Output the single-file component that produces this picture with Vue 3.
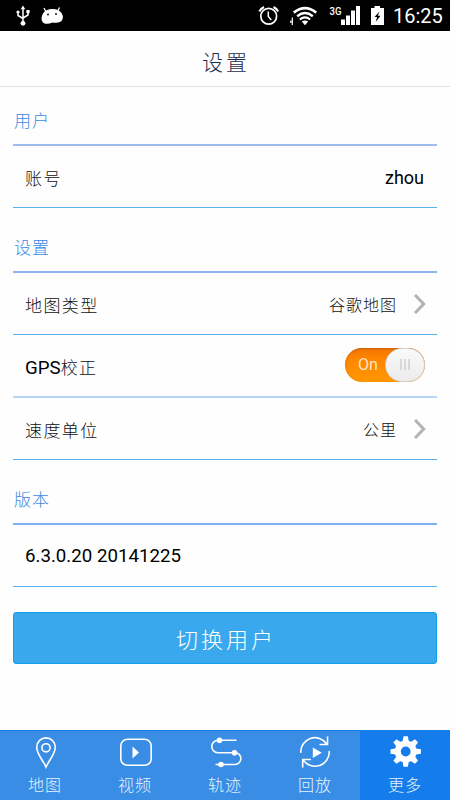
<script setup>
import { ref } from "vue";

const gpsFix = ref(true);
const active = ref("more");

const tabs = [
  { id: "map", label: "地图" },
  { id: "video", label: "视频" },
  { id: "track", label: "轨迹" },
  { id: "replay", label: "回放" },
  { id: "more", label: "更多" },
];
</script>

<template>
  <div class="screen">
    <div class="statusbar">
      <svg class="left" width="70" height="31" viewBox="0 0 70 31" fill="none" stroke="#fff">
        <path d="M23 8v14M18 12v3.5l5 3M28 11.5v3.5l-5 3" stroke-width="1.5" />
        <path d="M23 5.5l2.3 3.8h-4.6z" fill="#fff" stroke="none" />
        <circle cx="23" cy="23.3" r="2.4" fill="#fff" stroke="none" />
        <circle cx="18" cy="12" r="1.6" fill="#fff" stroke="none" />
        <rect x="26.4" y="10" width="3.2" height="3.2" fill="#fff" stroke="none" />
        <path d="M44 8l2 4M59.5 7.5l-2 4" stroke-width="1.3" />
        <path
          d="M46 10.5Q52 8 58 10Q62.5 12.5 63 17Q62.5 22 58 22.5Q55 23 52.5 22.6Q48 24.5 44.5 23.5Q41.2 22 41.6 17.5Q42.5 12.5 46 10.5Z"
          fill="#fff"
          stroke="none"
        />
        <circle cx="48" cy="14.5" r="0.9" fill="#000" stroke="none" />
        <circle cx="56" cy="14" r="0.9" fill="#000" stroke="none" />
      </svg>
      <svg width="130" height="31" viewBox="256 0 130 31" fill="none" stroke="#fff">
        <circle cx="268.7" cy="16.3" r="7.9" stroke-width="1.7" />
        <path d="M268.3 11.5v5l3 3.5" stroke-width="1.5" />
        <path d="M259.3 11.5q1.5-3 4.7-4.5M273.5 7q3.2 1.5 4.7 4.5" stroke-width="2" />
        <path d="M292.3 17.5v7.5M290.8 20.5v2.5" stroke-width="1.2" />
        <path d="M293.8 12.6Q305 3.8 316.2 12.6" stroke-width="2.7" />
        <path d="M297.2 16.2Q305 10 312.8 16.2" stroke-width="2.4" />
        <path d="M299.8 19.5Q305 15.3 310.2 19.5" stroke-width="2.2" />
        <path d="M301.8 21.6q3.2-2 6.4 0l-3.2 3.6z" fill="#fff" stroke="none" />
        <path
          d="M341 19.5h4V25h-4zM346 15.5h4V25h-4zM351 10.5h4V25h-4zM356 6h4v19h-4z"
          fill="#fff"
          stroke="none"
        />
        <text class="net" x="329.5" y="14.5" textLength="12" lengthAdjust="spacingAndGlyphs">3G</text>
        <path d="M371 8h3.5V6h5.5v2h4v17h-13z" fill="#fff" stroke="none" />
        <path d="M379.5 11.5l-5 5.500h2.600l-1.400 5 4.800-6.200h-2.700z" fill="#000" stroke="none" />
      </svg>
      <span class="time">16:25</span>
    </div>

    <header class="header">设置</header>

    <main class="content">
      <h2 class="section first">用户</h2>
      <div class="row">
        <span>账号</span>
        <span class="value latin">zhou</span>
      </div>

      <h2 class="section">设置</h2>
      <div class="row">
        <span>地图类型</span>
        <span class="value">谷歌地图</span>
        <svg class="arrow" width="12" height="20" viewBox="0 0 12 20">
          <path d="M1 1l8.700 9L1 19" fill="none" stroke="#b5b3b0" stroke-width="3" />
        </svg>
      </div>
      <div class="row soft">
        <span><span class="latin">GPS</span>校正</span>
        <button class="switch" :class="{ off: !gpsFix }" @click="gpsFix = !gpsFix">
          <span class="state">{{ gpsFix ? "On" : "Off" }}</span>
          <span class="knob"><i></i><i></i><i></i></span>
        </button>
      </div>
      <div class="row">
        <span>速度单位</span>
        <span class="value">公里</span>
        <svg class="arrow" width="12" height="20" viewBox="0 0 12 20">
          <path d="M1 1l8.700 9L1 19" fill="none" stroke="#b5b3b0" stroke-width="3" />
        </svg>
      </div>

      <h2 class="section version">版本</h2>
      <div class="row">
        <span class="latin">6.3.0.20 20141225</span>
      </div>

      <button class="logout">切换用户</button>
    </main>

    <nav class="tabs">
      <div
        v-for="tab in tabs"
        :key="tab.id"
        class="tab"
        :class="{ active: active === tab.id }"
        @click="active = tab.id"
      >
        <svg
          width="34"
          height="34"
          viewBox="0 0 34 34"
          fill="none"
          stroke="#fff"
          stroke-width="1.6"
        >
          <template v-if="tab.id === 'map'">
            <path d="M18 31C16 26 8.700 18 8.700 11.200a9.300 9.300 0 0 1 18.600 0C27.300 18 20 26 18 31z" />
            <circle cx="18" cy="11.8" r="4.1" />
          </template>
          <template v-else-if="tab.id === 'video'">
            <rect x="2.8" y="3.3" width="30.4" height="26" rx="6.5" />
            <path d="M14.500 10.500v12l6.500-6z" fill="#fff" stroke="none" />
          </template>
          <template v-else-if="tab.id === 'track'">
            <path d="M28.500 4.300H10a6.200 6.200 0 0 0 0 12.400H27a5.900 5.900 0 0 1 0 11.800H7.500" />
            <g fill="#fff" stroke="none">
              <circle cx="11.5" cy="4.3" r="2.8" />
              <circle cx="26.5" cy="16.7" r="2.8" />
              <circle cx="13" cy="28.5" r="2.8" />
            </g>
          </template>
          <template v-else-if="tab.id === 'replay'">
            <path d="M2.800 16.900A14.200 14.200 0 0 1 28.800 8M29.500 0.500V8.500H21.500" />
            <path d="M31.200 15A14.200 14.200 0 0 1 5.200 23.900M4.700 31.500V23.500H13" />
            <path d="M14.800 11.500v10.600l9-5.300z" fill="#fff" stroke="none" />
          </template>
          <template v-else>
            <g transform="translate(17.7 15.5)" fill="#fff" stroke="none">
              <path
                v-for="n in 8"
                :key="n"
                :transform="`rotate(${n * 45})`"
                d="M-3.300-9L-2.200-15.200H2.200L3.300-9z"
              />
            </g>
            <circle cx="17.7" cy="15.5" r="7.9" stroke-width="6" />
          </template>
        </svg>
        <span class="label">{{ tab.label }}</span>
      </div>
    </nav>
  </div>
</template>

<style>
body {
  margin: 0;
  background: #fff;
}
</style>

<style scoped>
.screen {
  width: 450px;
  height: 800px;
  display: flex;
  flex-direction: column;
  background: #fefefe;
  color: #111;
  font-family: Roboto, "Noto Sans CJK SC", sans-serif;
  font-weight: 300;
  overflow: hidden;
}

.statusbar {
  height: 31px;
  flex: none;
  display: flex;
  align-items: center;
  background: #000;
  color: #fff;
}

.statusbar .left {
  margin-right: auto;
}

.net {
  font-size: 11px;
  font-weight: 500;
  fill: #fff;
  stroke: none;
}

.time {
  width: 51px;
  margin: 1px 6px 0 7px;
  font-size: 20px;
  font-weight: 400;
  line-height: 30px;
}

.header {
  height: 56px;
  flex: none;
  display: flex;
  align-items: center;
  justify-content: center;
  padding: 4px 0 0 2px;
  box-sizing: border-box;
  border-bottom: 1px solid #e2e2e2;
  margin-bottom: 1px;
  color: #252a4c;
  font-size: 21px;
  letter-spacing: 3px;
}

.content {
  flex: 1;
  padding: 0 13px;
}

.section {
  height: 65px;
  box-sizing: border-box;
  margin: 0;
  padding: 14px 0 0 1px;
  border-bottom: 2px solid #8fb4f1;
  color: #3b8ae4;
  font-size: 17px;
  font-weight: 300;
  line-height: 52px;
  letter-spacing: 1px;
}

.section.first {
  height: 58px;
  padding-top: 7px;
  border-bottom-color: #9dbbf1;
}

.section.version {
  border-bottom-color: #7eaff0;
}

.row {
  height: 62px;
  box-sizing: border-box;
  display: flex;
  align-items: center;
  padding: 1px 12px 0 12px;
  border-bottom: 1px solid #5ab2ea;
  font-size: 17px;
  letter-spacing: 1.4px;
}

.row.soft {
  height: 63px;
  border-bottom: 2px solid #b3d7f5;
}

.latin {
  font-size: 18.7px;
  font-weight: 400;
  letter-spacing: 0;
  color: #000;
}

.value {
  margin-left: auto;
  font-size: 16px;
  letter-spacing: 1px;
}

.value.latin {
  margin-right: 1px;
  font-size: 18px;
  letter-spacing: 0;
}

.arrow {
  margin-left: 17px;
  margin-right: -1px;
}

.switch {
  width: 80px;
  height: 34px;
  margin: -3px 0 0 auto;
  padding: 0;
  display: flex;
  align-items: center;
  border: none;
  border-radius: 17px;
  background: linear-gradient(#f27400, #ff8500 30%, #ff9700);
  box-shadow: inset 0 1px 2px #c96513;
  cursor: pointer;
}

.switch.off {
  flex-direction: row-reverse;
  background: #ccc;
  box-shadow: none;
}

.state {
  flex: 1;
  padding-left: 6px;
  color: #ffe5c5;
  font-family: Roboto, sans-serif;
  font-size: 16px;
  text-align: center;
}

.knob {
  width: 40px;
  height: 34px;
  flex: none;
  box-sizing: border-box;
  display: flex;
  align-items: center;
  justify-content: center;
  gap: 2px;
  border: 1px solid #d0d0d0;
  border-radius: 17px;
  background: linear-gradient(#fafafa, #ebebeb);
}

.knob i {
  width: 2px;
  height: 11px;
  background: #d8d8d8;
}

.logout {
  width: 100%;
  height: 52px;
  display: block;
  margin-top: 25px;
  padding: 0 0 0 2px;
  border: 1px solid #109fe8;
  border-radius: 3px;
  background: #39a8ec;
  color: #fff;
  font-family: inherit;
  font-size: 22px;
  font-weight: 300;
  letter-spacing: 3px;
}

.tabs {
  height: 70px;
  flex: none;
  display: flex;
  background: #398de5;
}

.tab {
  width: 90px;
  height: 70px;
  box-sizing: border-box;
  display: flex;
  flex-direction: column;
  align-items: center;
  padding-top: 5px;
  border-top: 1px solid #167fe2;
  color: #e7f3ff;
  cursor: pointer;
}

.tab.active {
  background: #147ceb;
}

.label {
  margin-top: 4px;
  font-size: 16px;
  line-height: 24px;
  letter-spacing: 1px;
}
</style>
